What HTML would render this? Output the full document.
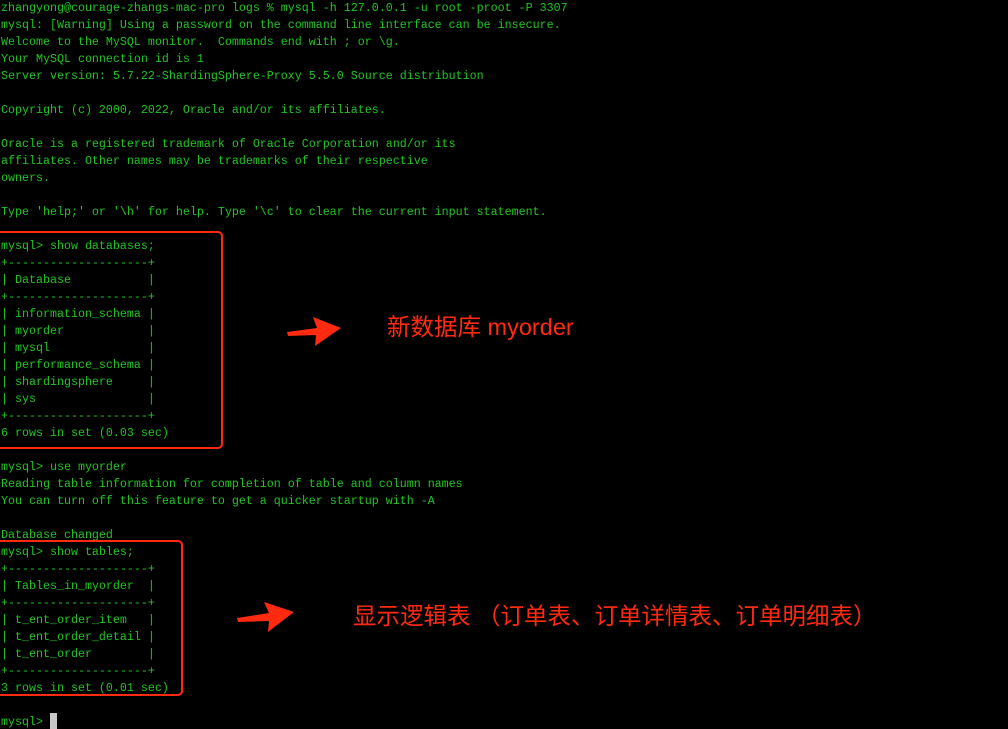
<!DOCTYPE html>
<html><head><meta charset="utf-8"><style>
html,body{margin:0;padding:0;background:#000;width:1008px;height:729px;overflow:hidden;position:relative}
pre{margin:0;position:absolute;left:1px;top:0px;font-family:"Liberation Mono",monospace;font-size:11.67px;line-height:17px;color:#22c322;white-space:pre}
.box{position:absolute;border:2px solid #ff2a10;border-radius:5px;box-sizing:border-box}
.ann{position:absolute;color:#ff2a10;font-family:"Liberation Sans","Noto Sans CJK SC",sans-serif;font-size:23.5px;line-height:28px;white-space:nowrap}
.cur{position:absolute;left:50px;top:713px;width:7px;height:16px;background:#c8c8c8}
</style></head><body>
<pre>zhangyong@courage-zhangs-mac-pro logs % mysql -h 127.0.0.1 -u root -proot -P 3307
mysql: [Warning] Using a password on the command line interface can be insecure.
Welcome to the MySQL monitor.  Commands end with ; or \g.
Your MySQL connection id is 1
Server version: 5.7.22-ShardingSphere-Proxy 5.5.0 Source distribution

Copyright (c) 2000, 2022, Oracle and/or its affiliates.

Oracle is a registered trademark of Oracle Corporation and/or its
affiliates. Other names may be trademarks of their respective
owners.

Type 'help;' or '\h' for help. Type '\c' to clear the current input statement.

mysql&gt; show databases;
+--------------------+
| Database           |
+--------------------+
| information_schema |
| myorder            |
| mysql              |
| performance_schema |
| shardingsphere     |
| sys                |
+--------------------+
6 rows in set (0.03 sec)

mysql&gt; use myorder
Reading table information for completion of table and column names
You can turn off this feature to get a quicker startup with -A

Database changed
mysql&gt; show tables;
+--------------------+
| Tables_in_myorder  |
+--------------------+
| t_ent_order_item   |
| t_ent_order_detail |
| t_ent_order        |
+--------------------+
3 rows in set (0.01 sec)

mysql&gt; </pre>
<div class="cur"></div>
<div class="box" style="left:-4px;top:231px;width:227px;height:218px"></div>
<div class="box" style="left:-4px;top:540px;width:187px;height:156px"></div>
<svg style="position:absolute;left:285px;top:313px" width="60" height="35" viewBox="0 0 60 35"><path d="M2 19 L32 15 L28 4 L56 15 L30 33 L31 22 L3 23 Z" fill="#ff2a10"/></svg>
<svg style="position:absolute;left:235px;top:599px" width="62" height="35" viewBox="0 0 62 35"><path d="M2 19 L34 14 L29 3 L59 13 L33 33 L34 22 L3 23 Z" fill="#ff2a10"/></svg>
<div class="ann" style="left:387px;top:313px">新数据库 myorder</div>
<div class="ann" style="left:353px;top:602px">显示逻辑表 （订单表、订单详情表、订单明细表）</div>
</body></html>
